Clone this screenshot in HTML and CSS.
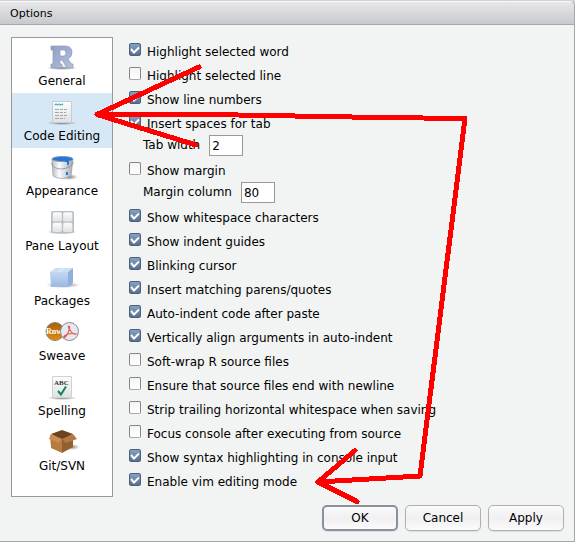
FILE: index.html
```html
<!DOCTYPE html>
<html lang="en">
<head>
<meta charset="utf-8">
<title>Options</title>
<link rel="stylesheet" href="styles.css">
</head>
<body>
<svg class="defs" aria-hidden="true">
  <defs>
    <linearGradient id="blue" x1="0" y1="0" x2="1" y2="1"><stop offset="0" stop-color="#8f9fc4"/><stop offset="1" stop-color="#b4bfda"/></linearGradient>
    <linearGradient id="paper" x1="0" y1="0" x2="0" y2="1"><stop offset="0" stop-color="#fdfdfd"/><stop offset="1" stop-color="#dfe1e4"/></linearGradient>
    <linearGradient id="metal" x1="0" y1="0" x2="1" y2="0"><stop offset="0" stop-color="#b9bec5"/><stop offset=".35" stop-color="#fafbfc"/><stop offset="1" stop-color="#a5abb2"/></linearGradient>
    <linearGradient id="cube" x1="0" y1="0" x2="0" y2="1"><stop offset="0" stop-color="#c3d7f1"/><stop offset="1" stop-color="#9cb9e2"/></linearGradient>
    <linearGradient id="orange" x1="0" y1="0" x2="0" y2="1"><stop offset="0" stop-color="#a8600f"/><stop offset="1" stop-color="#e38b0d"/></linearGradient>
    <radialGradient id="shade"><stop offset="0" stop-color="#555" stop-opacity=".75"/><stop offset="1" stop-color="#555" stop-opacity="0"/></radialGradient>
  </defs>
</svg>
<main class="dialog">
  <header class="titlebar"><h1>Options</h1></header>
  <div class="content">
    <nav class="sections">
      <a class="section" href="#general">
        <svg class="icon" viewBox="0 0 36 28"><ellipse cx="18" cy="23" rx="15" ry="2" fill="url(#shade)"/><path fill="url(#blue)" stroke="#8b98ba" stroke-width=".7" fill-rule="evenodd" d="M7 1h14q7 0 7 6.500 0 4.500-4 6.500l3.500 5H29v4h-6l-5-8h-2v4h2v4H7v-4h2V5H7zM16 5v6h3.500q2.500 0 2.500-3t-2.500-3z"/></svg>
        <span>General</span></a>
      <a class="section current" href="#code">
        <svg class="icon" viewBox="0 0 36 28"><ellipse cx="18" cy="23" rx="15" ry="2" fill="url(#shade)"/><path fill="url(#paper)" stroke="#c8cbcf" d="M8.500 1.500h19v21h-19z"/><path fill="none" stroke="#45b6d8" stroke-width="1.200" d="M10.500 5l1.500-1 1.500 1 1.500-1 1.500 1 1.500-1 1 1"/><path stroke="#a5a8ab" stroke-dasharray="4 1 3 1" d="M11 9.500h12M11 12.500h11M11 15.500h12M11 18.500h10"/></svg>
        <span>Code Editing</span></a>
      <a class="section" href="#appearance">
        <svg class="icon" viewBox="0 0 36 28"><ellipse cx="25" cy="22" rx="9" ry="3" fill="url(#shade)"/><path fill="url(#metal)" stroke="#999ea5" stroke-width=".7" d="M8 4l1 17q8 5 18 0l2-17z"/><ellipse cx="18.500" cy="4" rx="10.500" ry="2.500" fill="#2275e0" stroke="#8d9299"/><path d="M21 5h4v4l-1 2-1-2V7h-2z" fill="#2275e0"/><rect x="22" y="17" width="2" height="3" fill="#2275e0"/><path fill="none" stroke="#858c93" stroke-width=".8" d="M7.500 8q1 6 10 6 10-1 12-7"/></svg>
        <span>Appearance</span></a>
      <a class="section" href="#panes">
        <svg class="icon" viewBox="0 0 36 28"><ellipse cx="18" cy="22" rx="15" ry="2.500" fill="url(#shade)"/><rect x="7" y="1" width="23" height="22" rx="2" fill="#b9bfc5"/><g fill="url(#paper)" stroke="#f4f5f6" stroke-width=".6"><rect x="9" y="2.500" width="8.500" height="8.500" rx="1"/><rect x="19.500" y="2.500" width="8.500" height="8.500" rx="1"/><rect x="9" y="13" width="8.500" height="8.500" rx="1"/><rect x="19.500" y="13" width="8.500" height="8.500" rx="1"/></g></svg>
        <span>Pane Layout</span></a>
      <a class="section" href="#packages">
        <svg class="icon" viewBox="0 0 36 28"><ellipse cx="19" cy="20" rx="17" ry="3" fill="url(#shade)"/><path fill="url(#cube)" d="M6 7h18v15H7z"/><path fill="#cddff5" d="M6 7l5-4h18l-5 4z"/><path fill="#8fafdc" d="M24 7l5-4v15l-5 4z"/><path stroke="#edf4fd" stroke-width=".8" d="M15 7l5-4"/></svg>
        <span>Packages</span></a>
      <a class="section" href="#sweave">
        <svg class="icon" viewBox="0 0 36 28"><circle cx="11" cy="11.500" r="9" fill="url(#orange)" stroke="#8c826f"/><text x="2" y="14" class="rnw">Rnw</text><circle cx="25.500" cy="11.500" r="9" fill="#e5e8ec" stroke="#858b96"/><path fill="none" stroke="#e6574f" stroke-width="1.200" d="M24.500 6q2 0 .5 4-1 5-5 8-1-2 4-4 5-1 8 0-3 1-6-4-2-3-1.500-4z"/></svg>
        <span>Sweave</span></a>
      <a class="section" href="#spelling">
        <svg class="icon" viewBox="0 0 36 28"><ellipse cx="18" cy="23" rx="15" ry="2" fill="url(#shade)"/><path fill="url(#paper)" stroke="#ced1d5" d="M8.500 1.500h19v21h-19z"/><text x="10" y="10" class="abc">ABC</text><path fill="none" stroke="#168553" stroke-width="2" d="M14 16l3 3.500 5-8"/></svg>
        <span>Spelling</span></a>
      <a class="section" href="#git">
        <svg class="icon" viewBox="0 0 36 28"><ellipse cx="27" cy="17" rx="9" ry="3" fill="url(#shade)"/><path fill="#6c431e" d="M7 4l11-4 11 4-11 6z"/><path fill="#b67b3f" d="M6 5l12 4v14L7 18z"/><path fill="#94602f" d="M18 9l11-5v13l-11 6z"/><path fill="#c98d50" d="M7 4l11 5-3 4-10-4z"/><path fill="#b17a43" d="M18 9l11-5 4 5-11 4z"/></svg>
        <span>Git/SVN</span></a>
    </nav>
    <form class="options" id="options">
      <label class="check"><input type="checkbox" checked><span>Highlight selected word</span></label>
      <label class="check"><input type="checkbox"><span>Highlight selected line</span></label>
      <label class="check"><input type="checkbox" checked><span>Show line numbers</span></label>
      <label class="check"><input type="checkbox" checked><span>Insert spaces for tab</span></label>
      <label class="number"><span>Tab width</span><input type="text" value="2"></label>
      <label class="check"><input type="checkbox"><span>Show margin</span></label>
      <label class="number"><span>Margin column</span><input type="text" value="80"></label>
      <label class="check"><input type="checkbox" checked><span>Show whitespace characters</span></label>
      <label class="check"><input type="checkbox" checked><span>Show indent guides</span></label>
      <label class="check"><input type="checkbox" checked><span>Blinking cursor</span></label>
      <label class="check"><input type="checkbox" checked><span>Insert matching parens/quotes</span></label>
      <label class="check"><input type="checkbox" checked><span>Auto-indent code after paste</span></label>
      <label class="check"><input type="checkbox" checked><span>Vertically align arguments in auto-indent</span></label>
      <label class="check"><input type="checkbox"><span>Soft-wrap R source files</span></label>
      <label class="check"><input type="checkbox"><span>Ensure that source files end with newline</span></label>
      <label class="check"><input type="checkbox"><span>Strip trailing horizontal whitespace when saving</span></label>
      <label class="check"><input type="checkbox"><span>Focus console after executing from source</span></label>
      <label class="check"><input type="checkbox" checked><span>Show syntax highlighting in console input</span></label>
      <label class="check"><input type="checkbox" checked><span>Enable vim editing mode</span></label>
    </form>
  </div>
  <footer class="actions">
    <button class="primary" type="submit" form="options">OK</button>
    <button type="button">Cancel</button>
    <button type="button">Apply</button>
  </footer>
  <svg class="annotation" width="575" height="542" viewBox="0 0 575 542" aria-hidden="true">
    <path d="M199 67L97 114.500 196 145M97 114.500L238 115 380 117.500 465 118.500 420 476 318 482M355 450.500L318 482 357 501.500"/>
  </svg>
</main>
</body>
</html>
```
FILE: styles.css
```css
* { box-sizing: border-box; }

body {
  margin: 0;
  background: #d5d6d8;
  color: #000;
  font: 12px/16px "DejaVu Sans", sans-serif;
}

.defs { position: absolute; width: 0; height: 0; }

.dialog {
  position: relative;
  min-height: 100vh;
  overflow: hidden;
  display: flex;
  flex-direction: column;
  background: #f2f4f3;
  border-top: 1px solid #d0d1d4;
  border-right: 1px solid #a5a6a8;
  border-bottom: 1px solid #a5a6a8;
  border-radius: 0 6px 0 0;
}

.titlebar {
  height: 24px;
  padding: 4px 10px;
  background: linear-gradient(#e7e7ea, #c8c9cc);
  border-top: 1px solid #f8f8f9;
  border-bottom: 1px solid #a8a9ab;
}

.titlebar h1 {
  margin: 0;
  font-size: 11px;
  line-height: 16px;
  font-weight: normal;
}

.content {
  display: flex;
  gap: 16px;
  padding: 12px 11px 0;
}

.sections {
  flex: 0 0 102px;
  min-height: 460px;
  background: #fff;
  border: 1px solid #999;
}

.section {
  display: flex;
  flex-direction: column;
  align-items: center;
  height: 55px;
  padding-top: 7px;
  color: #000;
  text-decoration: none;
}

.section.current { background: #d6e7f6; }

.icon { width: 36px; height: 28px; flex: none; }
.rnw { font: bold 8px "Liberation Serif", serif; fill: #fff; }
.abc { font: bold 7px "Liberation Serif", serif; fill: #333; }

.options { flex: 1; padding-top: 2px; }

.check {
  display: flex;
  align-items: flex-start;
  gap: 6px;
  height: 24px;
  padding-top: 4px;
}

.check span { padding-top: 1px; }

.check input {
  appearance: none;
  width: 12px;
  height: 13px;
  margin: 0;
  background: linear-gradient(#f4f4f4, #fefefe);
  border: 1px solid #858585;
  border-bottom-color: #aaa;
  border-radius: 2px;
}

.check input:checked {
  background:
    url("data:image/svg+xml,%3Csvg xmlns='http://www.w3.org/2000/svg' viewBox='0 0 10 10'%3E%3Cpath d='M1 4l3 3.500 5-5' fill='none' stroke='white' stroke-width='2'/%3E%3C/svg%3E") center / 10px 10px no-repeat,
    linear-gradient(#87a0bf, #55708f);
  border-color: #4c6079;
}

.number {
  display: flex;
  align-items: flex-start;
  gap: 9px;
  height: 23px;
  padding-left: 14px;
}

.number span { line-height: 21px; }

.number input {
  width: 34px;
  height: 21px;
  margin: 0;
  padding: 0 2px;
  border: 1px solid #999;
  background: #fff;
  font: inherit;
}

.actions {
  display: flex;
  justify-content: flex-end;
  gap: 7px;
  padding: 8px 10px 10px;
}

.actions button {
  width: 76px;
  height: 26px;
  padding: 0;
  background: linear-gradient(#fafafb, #f0f0f2 50%, #fbfbfc);
  border: 1px solid #adafb4;
  border-radius: 5px;
  box-shadow: 0 1px 1px #dddfdf;
  color: #000;
  font: inherit;
}

.actions .primary { border: 2px solid #8a909c; }

.annotation {
  position: absolute;
  top: -1px;
  left: 0;
  pointer-events: none;
}

.annotation path {
  fill: none;
  stroke: #f00;
  stroke-width: 5;
  stroke-linecap: round;
  stroke-linejoin: round;
  shape-rendering: crispEdges;
}
```
